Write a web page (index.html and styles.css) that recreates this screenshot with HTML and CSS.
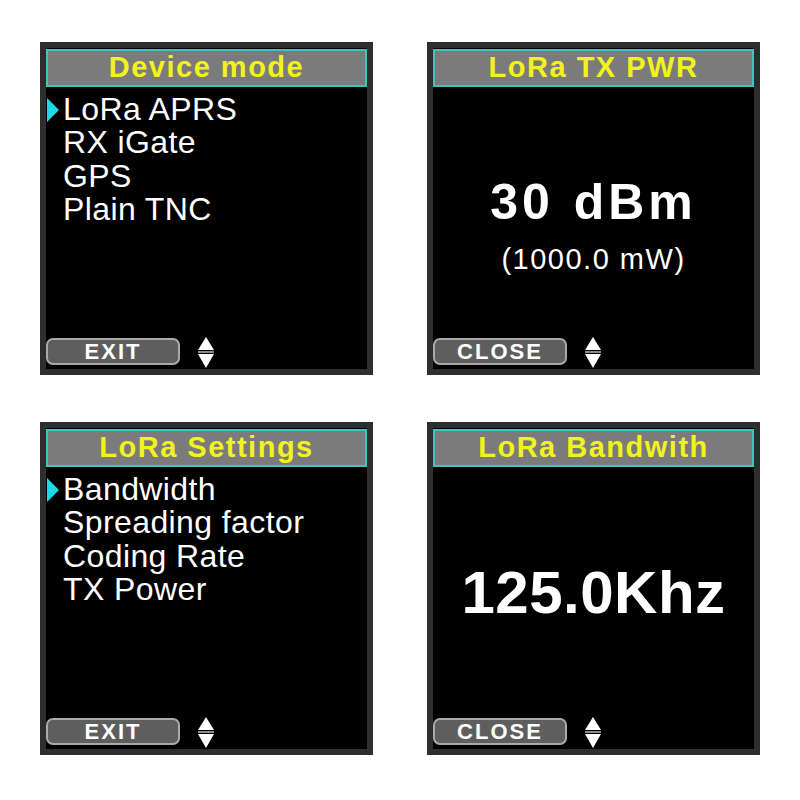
FILE: index.html
```html
<!DOCTYPE html>
<html lang="en">
<head>
    <meta charset="UTF-8">
    <meta name="viewport" content="width=device-width, initial-scale=1.0">
    <title>LoRa APRS screens</title>
    <link rel="stylesheet" href="styles.css">
</head>
<body>
    <div class="screens">
        <!-- device mode menu -->
        <div class="screen">
            <div class="title">Device mode</div>
            <ul class="menu">
                <li class="menu-item selected"><span class="marker"></span>LoRa APRS</li>
                <li class="menu-item"><span class="marker"></span>RX iGate</li>
                <li class="menu-item"><span class="marker"></span>GPS</li>
                <li class="menu-item"><span class="marker"></span>Plain TNC</li>
            </ul>
            <div class="footer">
                <div class="soft-btn">EXIT</div>
                <svg class="updown" width="16" height="31" viewBox="0 0 16 31">
                    <polygon points="8,0 16,13 0,13" fill="#fff"/>
                    <rect x="0" y="14" width="16" height="2" fill="#8a8a8a"/>
                    <polygon points="0,17 16,17 8,31" fill="#fff"/>
                </svg>
            </div>
        </div>

        <!-- tx power -->
        <div class="screen">
            <div class="title">LoRa TX PWR</div>
            <div class="value value-power">
                <div class="big">30 dBm</div>
                <div class="sub">(1000.0 mW)</div>
            </div>
            <div class="footer">
                <div class="soft-btn">CLOSE</div>
                <svg class="updown" width="16" height="31" viewBox="0 0 16 31">
                    <polygon points="8,0 16,13 0,13" fill="#fff"/>
                    <rect x="0" y="14" width="16" height="2" fill="#8a8a8a"/>
                    <polygon points="0,17 16,17 8,31" fill="#fff"/>
                </svg>
            </div>
        </div>

        <!-- lora settings menu -->
        <div class="screen">
            <div class="title">LoRa Settings</div>
            <ul class="menu">
                <li class="menu-item selected"><span class="marker"></span>Bandwidth</li>
                <li class="menu-item"><span class="marker"></span>Spreading factor</li>
                <li class="menu-item"><span class="marker"></span>Coding Rate</li>
                <li class="menu-item"><span class="marker"></span>TX Power</li>
            </ul>
            <div class="footer">
                <div class="soft-btn">EXIT</div>
                <svg class="updown" width="16" height="31" viewBox="0 0 16 31">
                    <polygon points="8,0 16,13 0,13" fill="#fff"/>
                    <rect x="0" y="14" width="16" height="2" fill="#8a8a8a"/>
                    <polygon points="0,17 16,17 8,31" fill="#fff"/>
                </svg>
            </div>
        </div>

        <!-- bandwidth -->
        <div class="screen">
            <div class="title">LoRa Bandwith</div>
            <div class="value value-bw">
                <div class="huge">125.0Khz</div>
            </div>
            <div class="footer">
                <div class="soft-btn">CLOSE</div>
                <svg class="updown" width="16" height="31" viewBox="0 0 16 31">
                    <polygon points="8,0 16,13 0,13" fill="#fff"/>
                    <rect x="0" y="14" width="16" height="2" fill="#8a8a8a"/>
                    <polygon points="0,17 16,17 8,31" fill="#fff"/>
                </svg>
            </div>
        </div>
    </div>
</body>
</html>
```

FILE: styles.css
```css
* {
    box-sizing: border-box;
    margin: 0;
    padding: 0;
}
body {
    background: #fff;
    font-family: 'Liberation Sans', Arial, sans-serif;
    color: #fff;
}
.screens {
    display: grid;
    grid-template-columns: 333px 333px;
    grid-template-rows: 333px 333px;
    column-gap: 54px;
    row-gap: 47px;
    padding: 42px 0 0 40px;
}
.screen {
    display: flex;
    flex-direction: column;
    background: #000;
    border: 6px solid #2e2e2e;
    overflow: hidden;
}
.title {
    margin-top: 1px;
    height: 38px;
    background: #7b7b7b;
    border: 2px solid #3ec6bd;
    color: #f2f21c;
    font-weight: bold;
    font-size: 29px;
    letter-spacing: 1.5px;
    line-height: 33px;
    text-align: center;
}
.menu {
    list-style: none;
    flex: 1;
    padding-top: 6px;
}
.menu-item {
    display: flex;
    align-items: center;
    height: 33.3px;
    font-size: 32px;
    line-height: 33px;
    letter-spacing: 0.4px;
    white-space: nowrap;
}
.marker {
    width: 16px;
    height: 24px;
    margin-left: 1px;
    flex-shrink: 0;
}
.selected .marker {
    width: 0;
    margin-right: 4px;
    border-left: 12px solid #1ed8e6;
    border-top: 12px solid transparent;
    border-bottom: 12px solid transparent;
}
.value {
    flex: 1;
    text-align: center;
}
.value-power {
    padding-top: 90px;
}
.value-bw {
    padding-top: 96px;
}
.big {
    font-weight: bold;
    font-size: 50px;
    line-height: 50px;
    letter-spacing: 4px;
    word-spacing: 2px;
}
.sub {
    margin-top: 18px;
    font-size: 29px;
    line-height: 29px;
    letter-spacing: 1.5px;
}
.huge {
    font-weight: bold;
    font-size: 60px;
    line-height: 60px;
    letter-spacing: 0.5px;
}
.footer {
    display: flex;
    align-items: flex-end;
    gap: 18px;
    padding-bottom: 1px;
}
.soft-btn {
    width: 134px;
    height: 27px;
    margin-bottom: 3px;
    background: #5e5e5e;
    border: 2px solid #aaa;
    border-radius: 7px;
    font-weight: bold;
    font-size: 22px;
    line-height: 23px;
    letter-spacing: 2px;
    text-align: center;
}
.updown {
    display: block;
}
```
